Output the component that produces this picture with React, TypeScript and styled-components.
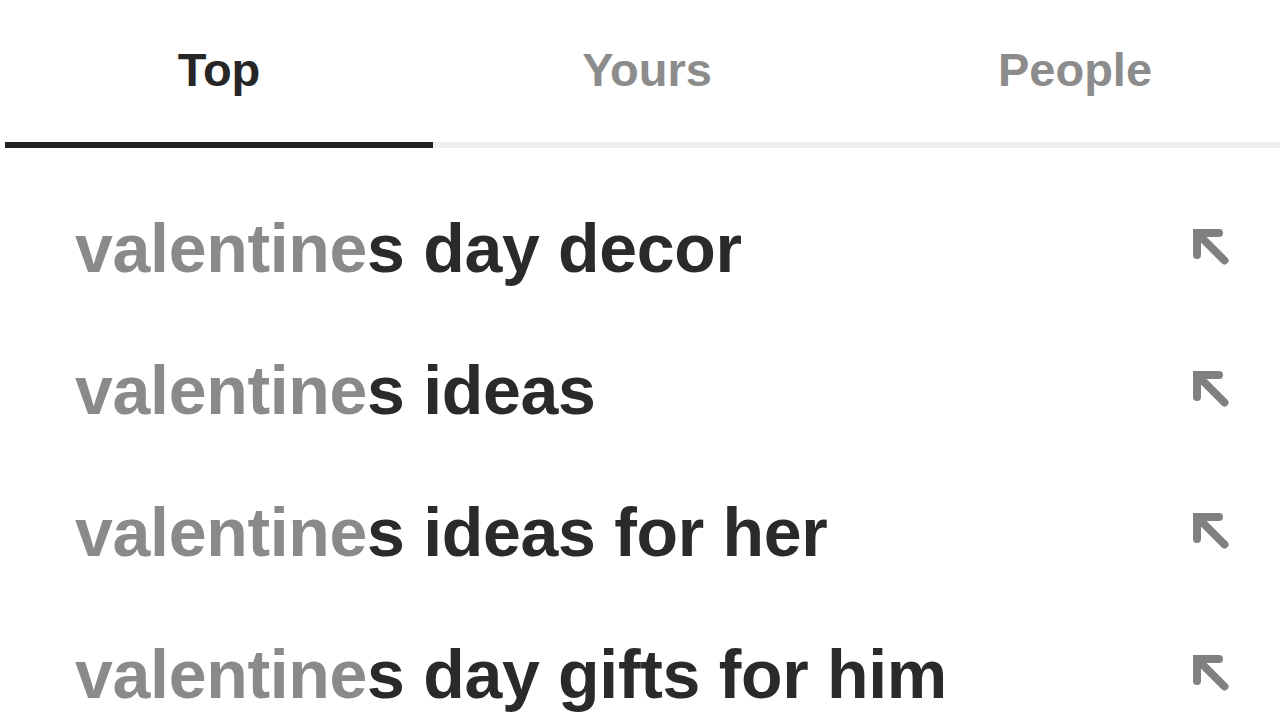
import React from 'react';
import styled, { createGlobalStyle } from 'styled-components';

const GlobalStyle = createGlobalStyle`
  html, body {
    margin: 0;
    padding: 0;
    background: #ffffff;
    overflow: hidden;
  }
  body {
    font-family: "Liberation Sans", Arial, sans-serif;
  }
`;

const Page = styled.div`
  width: 1280px;
  height: 720px;
  overflow: hidden;
  background: #fff;
`;

const Tabs = styled.div`
  display: grid;
  grid-template-columns: repeat(3, 428px);
  margin-left: 5px;
`;

const Tab = styled.div<{ active?: boolean }>`
  height: 148px;
  display: flex;
  align-items: center;
  justify-content: center;
  padding-bottom: 4px;
  box-sizing: border-box;
  border-bottom: 6px solid ${({ active }) => (active ? '#222222' : '#eeeeee')};
  font-size: 47px;
  font-weight: 700;
  color: ${({ active }) => (active ? '#262626' : '#8c8c8c')};
`;

const List = styled.ul`
  list-style: none;
  margin: 0;
  padding: 29px 51px 0 75px;
`;

const Row = styled.li`
  height: 142px;
  display: flex;
  align-items: center;
  justify-content: space-between;
`;

const Suggestion = styled.div`
  font-size: 68px;
  font-weight: 700;
  letter-spacing: -0.3px;
  color: #2a2a2a;
  white-space: nowrap;
`;

const Typed = styled.span`
  color: #8a8a8a;
`;

const ArrowIcon = styled.svg`
  width: 36px;
  height: 36px;
  flex: none;
  margin-bottom: 2px;
`;

const FillArrow = () => (
  <ArrowIcon viewBox="0 0 36 36">
    <path
      d="M4 26 V4 H26 M4 4 L31.5 31.5"
      fill="none"
      stroke="#808080"
      strokeWidth="8"
      strokeLinecap="round"
      strokeLinejoin="miter"
    />
  </ArrowIcon>
);

const query = 'valentine';
const suggestions = [
  's day decor',
  's ideas',
  's ideas for her',
  's day gifts for him',
];

const tabs = ['Top', 'Yours', 'People'];

export default function App() {
  return (
    <Page>
      <GlobalStyle />
      <Tabs>
        {tabs.map((t, i) => (
          <Tab key={t} active={i === 0}>
            {t}
          </Tab>
        ))}
      </Tabs>
      <List>
        {suggestions.map((s) => (
          <Row key={s}>
            <Suggestion>
              <Typed>{query}</Typed>
              {s}
            </Suggestion>
            <FillArrow />
          </Row>
        ))}
      </List>
    </Page>
  );
}
